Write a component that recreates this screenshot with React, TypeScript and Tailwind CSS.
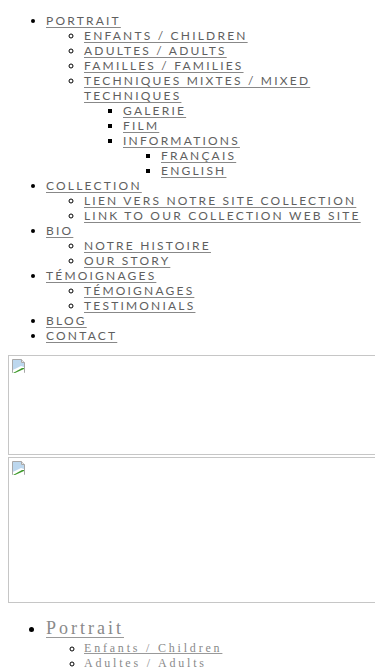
import * as React from "react"

type Item = { label: string; children?: Item[] }

const menu: Item[] = [
    {
        label: "PORTRAIT",
        children: [
            { label: "ENFANTS / CHILDREN" },
            { label: "ADULTES / ADULTS" },
            { label: "FAMILLES / FAMILIES" },
            {
                label: "TECHNIQUES MIXTES / MIXED TECHNIQUES",
                children: [
                    { label: "GALERIE" },
                    { label: "FILM" },
                    {
                        label: "INFORMATIONS",
                        children: [{ label: "FRANÇAIS" }, { label: "ENGLISH" }],
                    },
                ],
            },
        ],
    },
    {
        label: "COLLECTION",
        children: [{ label: "LIEN VERS NOTRE SITE COLLECTION" }, { label: "LINK TO OUR COLLECTION WEB SITE" }],
    },
    { label: "BIO", children: [{ label: "NOTRE HISTOIRE" }, { label: "OUR STORY" }] },
    { label: "TÉMOIGNAGES", children: [{ label: "TÉMOIGNAGES" }, { label: "TESTIMONIALS" }] },
    { label: "BLOG" },
    { label: "CONTACT" },
]

const markers = ["list-disc pl-[38px]", "list-[circle] pl-[38px]", "list-[square] pl-[39px]", "list-[square] pl-[38px]"]

function MenuList({ items, depth }: { items: Item[]; depth: number }) {
    return (
        <ul className={markers[depth]}>
            {items.map((item) => (
                <li key={item.label + depth}>
                    <a href="#" className="text-[#5f5f5f] underline decoration-[#888] underline-offset-[2px]">
                        {item.label}
                    </a>
                    {item.children && <MenuList items={item.children} depth={depth + 1} />}
                </li>
            ))}
        </ul>
    )
}

function BrokenImage({ className }: { className: string }) {
    return (
        <div className={`border border-[#c6c6c6] p-[2px] ${className}`}>
            <svg width="16" height="16" viewBox="0 0 16 16">
                <path d="M1.5 1.5h9l3 3v10h-12z" fill="#f4f4f4" stroke="#a8a8a8" />
                <path d="M2 2h8v3h3v4L2 12z" fill="#bcd7ee" />
                <path d="M2 15V12l8-4 3 1v6z" fill="#ffffff" />
                <path d="M2 15l9-5 2 0v1L4 15z" fill="#3f9b2c" />
                <path d="M10.5 1.5v3h3" fill="#e6e6e6" stroke="#a8a8a8" />
            </svg>
        </div>
    )
}

export default function App() {
    return (
        <div className="min-h-screen overflow-hidden bg-white px-2 pt-[13px] text-black">
            <nav
                className="text-[12px] leading-[15px] tracking-[2.2px]"
                style={{ fontFamily: "Lato, 'Open Sans', sans-serif" }}
            >
                <MenuList items={menu} depth={0} />
            </nav>

            <BrokenImage className="mt-[12px] h-[100px] w-[420px]" />
            <BrokenImage className="mt-[2px] h-[146px] w-[420px]" />

            <ul
                className="mt-[13px] list-disc pl-[38px]"
                style={{ fontFamily: "'Liberation Serif', 'Times New Roman', serif" }}
            >
                <li className="text-[18px] leading-[25px] tracking-[3px]">
                    <a href="#" className="text-[#8a8a8a] underline decoration-[#999] underline-offset-[3px]">
                        Portrait
                    </a>
                    <ul className="list-[circle] pl-[38px] text-[12px] leading-[15px] tracking-[2.8px]">
                        <li>
                            <a href="#" className="text-[#8a8a8a] underline decoration-[#999]">
                                Enfants / Children
                            </a>
                        </li>
                        <li>
                            <a href="#" className="text-[#8a8a8a] underline decoration-[#999]">
                                Adultes / Adults
                            </a>
                        </li>
                        <li>
                            <a href="#" className="text-[#8a8a8a] underline decoration-[#999]">
                                Familles / Families
                            </a>
                        </li>
                    </ul>
                </li>
            </ul>
        </div>
    )
}
